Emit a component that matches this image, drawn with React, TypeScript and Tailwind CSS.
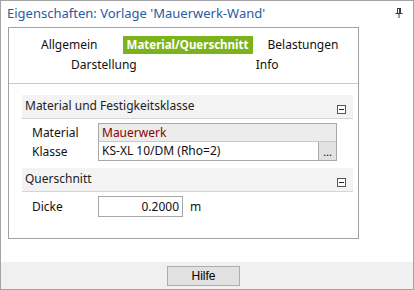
import React from 'react';

const ui = { fontFamily: '"Segoe UI", "Noto Sans", "Open Sans", sans-serif' };

function Pin() {
  return (
    <svg width="8" height="10" viewBox="0 0 8 10" className="block">
      <path d="M2 0.5h4M2.5 0.5v5M5.5 0.5v5M4.5 1v4.5M0.5 5.5h7M4 5.5v4.5" stroke="#3c3c3c" strokeWidth="1" fill="none" />
    </svg>
  );
}

function Collapse() {
  return (
    <div className="flex h-[9px] w-[9px] items-center justify-center border border-[#555] bg-white">
      <div className="h-px w-[5px] bg-[#222]" />
    </div>
  );
}

function GroupHeader({ title }: { title: string }) {
  return (
    <div className="ml-[13px] mr-[5px] flex h-[24px] items-center justify-between border-b border-[#d5d5d5] bg-[#f3f3f3] pl-[3px] pr-[7px] text-[12px] text-[#222]">
      <span className="mt-[-2px]">{title}</span>
      <div className="mt-[6px]">
        <Collapse />
      </div>
    </div>
  );
}

export default function App() {
  return (
    <div className="flex h-[290px] w-[414px] flex-col border border-[#a3a3a3] bg-white" style={ui}>
      <div className="flex h-[26px] items-center justify-between pl-[6px] pr-[10px]">
        <span className="mt-[-1px] text-[13px] text-[#2c5aa0]">Eigenschaften: Vorlage 'Mauerwerk-Wand'</span>
        <div className="mt-[-2px]">
          <Pin />
        </div>
      </div>

      <div className="ml-[7px] flex h-[212px] w-[351px] flex-col border border-[#a0a0a0] text-[12px] text-[#111]">
        <div className="h-[56px] border-b border-[#c8c8c8]">
          <div className="mt-[8px] flex h-[18px] items-center">
            <span className="ml-[32px]">Allgemein</span>
            <span className="ml-[25px] flex h-[18px] w-[130px] items-center justify-center bg-[#7cb31c] text-[11.5px] font-bold text-white">
              Material/Querschnitt
            </span>
            <span className="ml-[15px]">Belastungen</span>
          </div>
          <div className="mt-[2px] flex h-[18px] items-center">
            <span className="ml-[62px]">Darstellung</span>
            <span className="ml-[119px]">Info</span>
          </div>
        </div>

        <div className="pt-[11px]">
          <GroupHeader title="Material und Festigkeitsklasse" />
          <div className="mt-[4px] flex">
            <div className="ml-[23px] flex w-[66px] flex-col">
              <span className="flex h-[19px] items-center">Material</span>
              <span className="flex h-[19px] items-center">Klasse</span>
            </div>
            <div className="flex w-[239px] flex-col border border-[#a8a8a8]">
              <div className="flex h-[18px] items-center border-b border-[#c8c8c8] bg-[#ececec] pl-[3px] text-[#8b0000]">Mauerwerk</div>
              <div className="flex h-[18px] items-center">
                <span className="flex-1 pl-[3px]">KS-XL 10/DM (Rho=2)</span>
                <span className="flex h-[18px] w-[18px] items-center justify-center border-l border-[#a8a8a8] bg-[#e2e2e2] text-[11px] leading-none">…</span>
              </div>
            </div>
          </div>

          <div className="mt-[7px]">
            <GroupHeader title="Querschnitt" />
          </div>
          <div className="mt-[4px] flex items-center">
            <span className="ml-[23px] w-[66px]">Dicke</span>
            <div className="flex h-[21px] w-[85px] items-center justify-end border border-[#a8a8a8] pr-[3px]">0.2000</div>
            <span className="ml-[7px]">m</span>
          </div>
        </div>
      </div>

      <div className="mt-[23px] flex flex-1 items-start justify-center bg-[#f0f0f0] pr-[7px] pt-[4px]">
        <button
          className="flex h-[20px] w-[73px] items-center justify-center border border-[#adadad] bg-[#e1e1e1] text-[12px] text-black"
          style={{ fontFamily: '"Liberation Sans", Arial, sans-serif' }}
        >
          Hilfe
        </button>
      </div>
    </div>
  );
}
